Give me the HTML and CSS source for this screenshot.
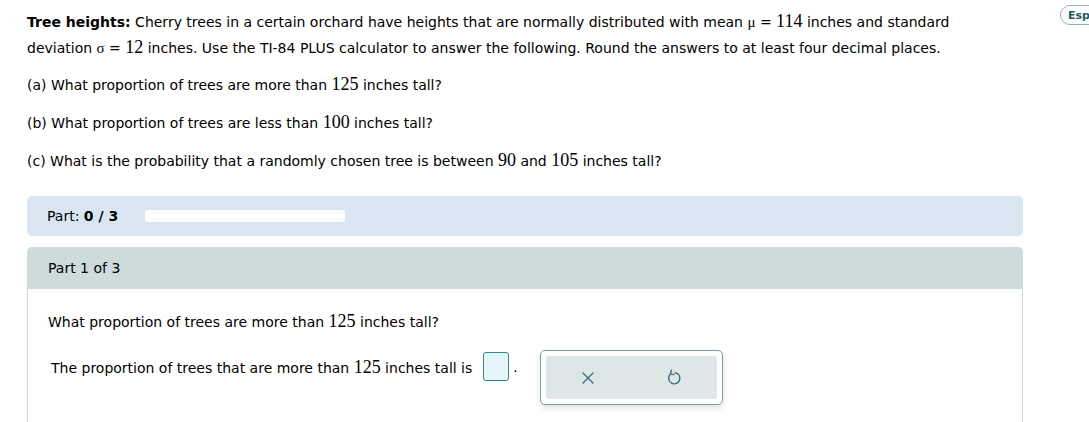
FILE: index.html
```html
<!DOCTYPE html>
<html>
<head>
<meta charset="utf-8">
<link rel="stylesheet" href="styles.css">
</head>
<body>
<div class="page">
  <button class="lang">Español</button>
  <div class="problem">
    <p class="intro"><b>Tree heights:</b> Cherry trees in a certain orchard have heights that are normally distributed with mean <span class="sym">μ</span> = <span class="num">114</span> inches and standard deviation <span class="sym">σ</span> = <span class="num">12</span> inches. Use the TI-84 PLUS calculator to answer the following. Round the answers to at least four decimal places.</p>
    <p class="q">(a) What proportion of trees are more than <span class="num">125</span> inches tall?</p>
    <p class="q">(b) What proportion of trees are less than <span class="num">100</span> inches tall?</p>
    <p class="q">(c) What is the probability that a randomly chosen tree is between <span class="num">90</span> and <span class="num">105</span> inches tall?</p>
  </div>
  <div class="progress">
    <span class="plabel">Part: <b>0 / 3</b></span>
    <span class="pbar"></span>
  </div>
  <div class="part">
    <div class="phead">Part 1 of 3</div>
    <div class="pbody">
      <p class="pq">What proportion of trees are more than <span class="num">125</span> inches tall?</p>
      <div class="answer">
        <span class="atext">The proportion of trees that are more than <span class="num">125</span> inches tall is</span>
        <span class="box"></span>
        <span class="dot">.</span>
        <div class="tools">
          <div class="tools-inner">
            <svg class="ic" width="14" height="14" viewBox="0 0 14 14"><path d="M2 2 L12 12 M12 2 L2 12" stroke="#3c6e7a" stroke-width="1.4" fill="none" stroke-linecap="round"/></svg>
            <svg class="ic" width="16" height="18" viewBox="0 0 16 18"><path d="M4.6 5 A5.6 5.6 0 1 0 9.2 3.7" stroke="#3c6e7a" stroke-width="1.4" fill="none" stroke-linecap="round"/><path d="M5.4 1.2 L4.4 4.9 L8 5.6" stroke="#3c6e7a" stroke-width="1.4" fill="none" stroke-linecap="round" stroke-linejoin="round"/></svg>
          </div>
        </div>
      </div>
    </div>
  </div>
</div>
</body>
</html>
```
FILE: styles.css
```css
html, body {
  margin: 0;
  padding: 0;
  background: #ffffff;
  overflow: hidden;
}
body {
  font-family: "DejaVu Sans", Verdana, sans-serif;
  font-size: 14px;
  color: #000;
}
.page {
  position: relative;
  width: 1089px;
  height: 422px;
  padding: 0 66px 0 27px;
  box-sizing: border-box;
}
.lang {
  position: absolute;
  left: 1060px;
  top: 5px;
  height: 20px;
  padding: 0 7px;
  border: 1px solid #8fb0b6;
  border-radius: 10px;
  background: #fff;
  color: #1f5966;
  font-family: "DejaVu Sans", Verdana, sans-serif;
  font-weight: bold;
  font-size: 11px;
  white-space: nowrap;
}
.problem {
  padding-top: 9px;
}
.problem p {
  margin: 0;
}
.intro {
  line-height: 25px;
  width: 950px;
}
.q {
  line-height: 20px;
  margin-top: 17px !important;
}
.intro + .q {
  margin-top: 13px !important;
}
.num {
  font-family: "Liberation Serif", "Times New Roman", serif;
  font-size: 18px;
}
.sym {
  font-family: "Liberation Serif", "Times New Roman", serif;
  font-size: 15px;
}
.progress {
  margin-top: 25px;
  width: 996px;
  height: 40px;
  background: #d9e6f1;
  border-radius: 5px;
  display: flex;
  align-items: center;
  padding-left: 20px;
  box-sizing: border-box;
}
.plabel {
  width: 98px;
}
.pbar {
  width: 200px;
  height: 12px;
  background: #fff;
  border-radius: 3px;
}
.part {
  margin-top: 11px;
  width: 996px;
}
.phead {
  height: 42px;
  background: #cddbdc;
  border-radius: 5px 5px 0 0;
  display: flex;
  align-items: center;
  padding-left: 21px;
}
.pbody {
  border-left: 1px solid #c9d7d8;
  border-right: 1px solid #c9d7d8;
  height: 140px;
  padding-left: 20px;
}
.pq {
  margin: 0;
  padding-top: 22px;
  line-height: 20px;
}
.answer {
  display: flex;
  align-items: flex-start;
  margin-top: 18px;
  padding-left: 3px;
}
.atext {
  line-height: 20px;
  margin-top: 7px;
}
.box {
  width: 24px;
  height: 27px;
  margin-left: 11px;
  margin-top: 2px;
  border: 1px solid #2e8696;
  border-radius: 3px;
  background: #e4f6f9;
}
.dot {
  margin-left: 4px;
  line-height: 20px;
  margin-top: 7px;
}
.tools {
  margin-left: 22px;
  width: 183px;
  height: 55px;
  box-sizing: border-box;
  border: 1px solid #7e9ea6;
  border-radius: 5px;
  padding: 5px;
  box-shadow: 0 3px 6px rgba(0,0,0,0.12);
  background: #fff;
}
.tools-inner {
  height: 100%;
  background: #dfe6e8;
  border-radius: 3px;
  display: flex;
  align-items: center;
  justify-content: space-around;
}
.ic {
  display: block;
}
```
